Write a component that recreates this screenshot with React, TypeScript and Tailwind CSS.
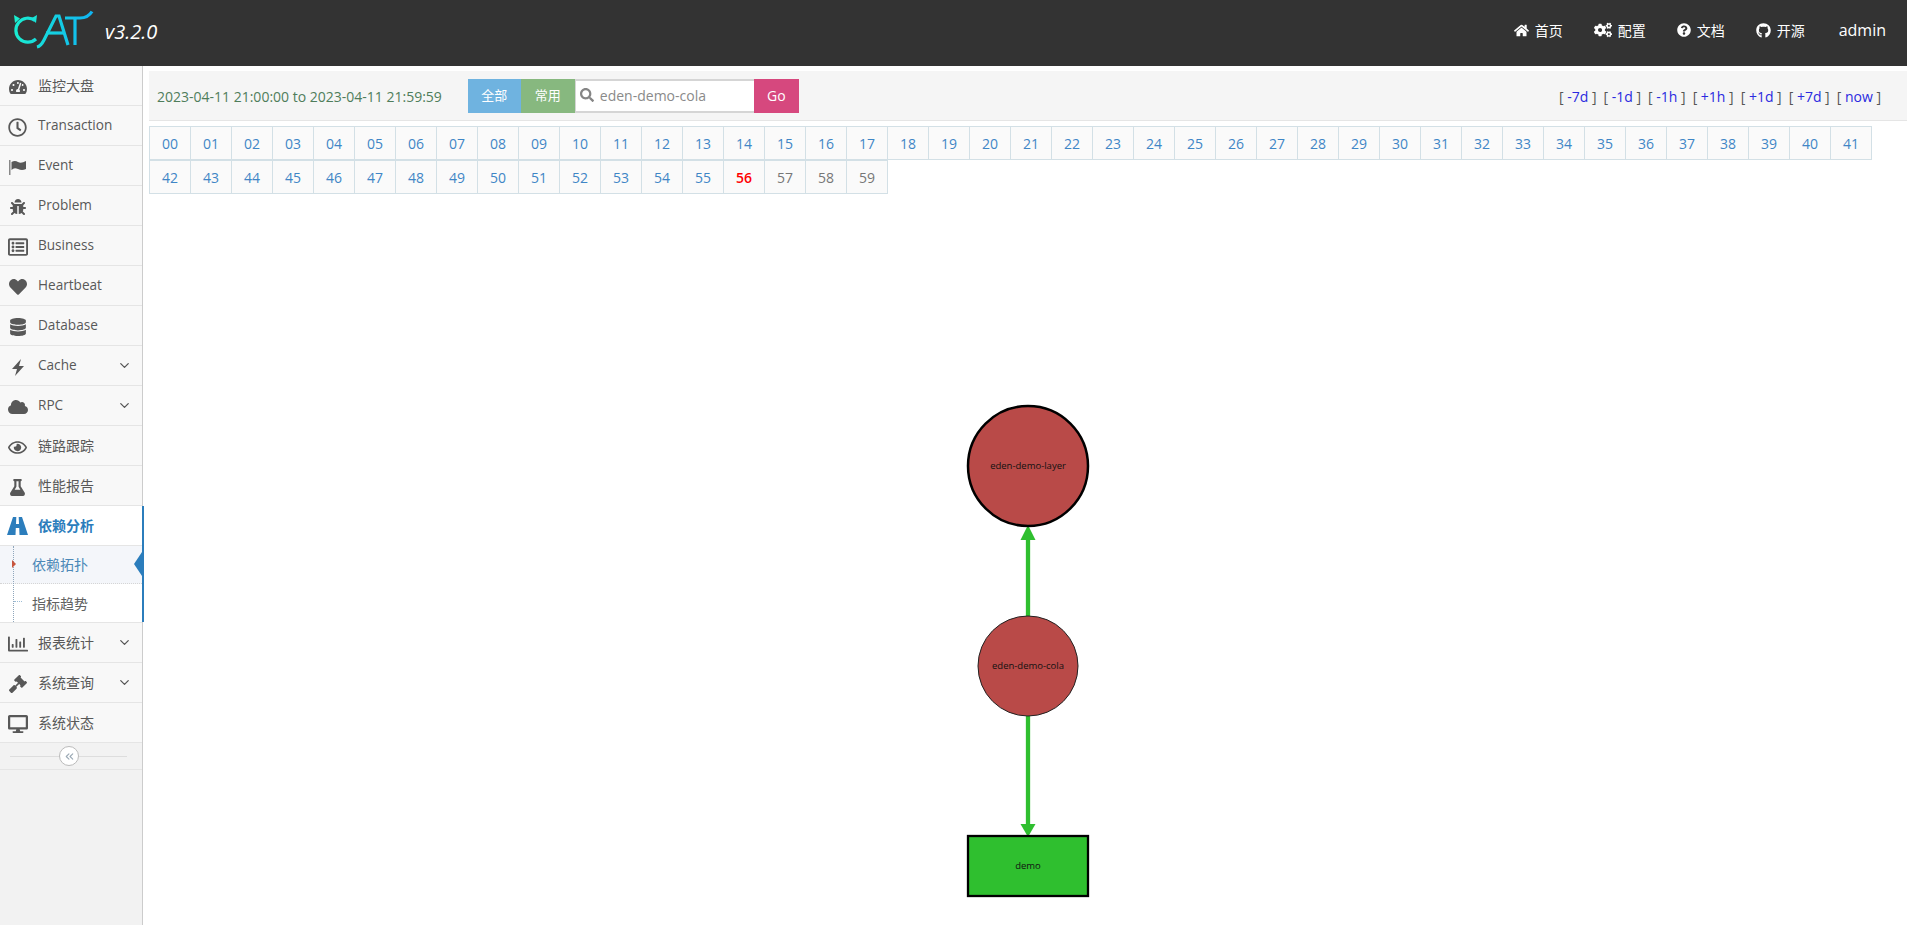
import type { ReactNode } from "react";
import {
  FaBug,
  FaCloud,
  FaCogs,
  FaDatabase,
  FaDesktop,
  FaFlask,
  FaGavel,
  FaGithub,
  FaHeart,
  FaHome,
  FaQuestionCircle,
  FaRegChartBar,
  FaRegClock,
  FaRegEye,
  FaRegListAlt,
  FaSearch,
  FaTachometerAlt,
} from "react-icons/fa";
import { FiChevronDown, FiChevronsLeft } from "react-icons/fi";

const FONT = "font-['Open_Sans','Noto_Sans_CJK_SC',sans-serif]";

type NavItem = { icon: ReactNode; label: string; arrow?: boolean };

function FlagIcon() {
  return (
    <svg width="18" height="15" viewBox="0 0 18 15" fill="currentColor">
      <rect x="0" y="0" width="1.500" height="15" fill="#888888" />
      <path d="M2.500 2Q6 0 9 2T17 1V9Q13 11 9 9T2.500 10Z" />
    </svg>
  );
}

function BoltIcon() {
  return (
    <svg width="12" height="17" viewBox="0 0 12 17" fill="currentColor">
      <path d="M9 0L0 10H5L3 17L12 7H7Z" />
    </svg>
  );
}

function RoadIcon() {
  return (
    <svg width="21" height="18" viewBox="0 0 21 18" fill="currentColor">
      <path d="M6 0H9.300L9 7H12L11.700 0H15L21 18H12.500L12.200 11H8.800L8.500 18H0Z" />
    </svg>
  );
}

const topItems: NavItem[] = [
  { icon: <FaTachometerAlt size={18} />, label: "监控大盘" },
  { icon: <FaRegClock size={19} />, label: "Transaction" },
  { icon: <FlagIcon />, label: "Event" },
  { icon: <FaBug size={16} />, label: "Problem" },
  { icon: <FaRegListAlt size={20} />, label: "Business" },
  { icon: <FaHeart size={18} />, label: "Heartbeat" },
  { icon: <FaDatabase size={18} />, label: "Database" },
  { icon: <BoltIcon />, label: "Cache", arrow: true },
  { icon: <FaCloud size={20} />, label: "RPC", arrow: true },
  { icon: <FaRegEye size={19} />, label: "链路跟踪" },
  { icon: <FaFlask size={17} />, label: "性能报告" },
];

const bottomItems: NavItem[] = [
  { icon: <FaRegChartBar size={20} />, label: "报表统计", arrow: true },
  { icon: <FaGavel size={18} />, label: "系统查询", arrow: true },
  { icon: <FaDesktop size={20} />, label: "系统状态" },
];

const hours = Array.from({ length: 60 }, (_, i) => String(i).padStart(2, "0"));
const jumps = ["-7d", "-1d", "-1h", "+1h", "+1d", "+7d", "now"];

function Logo() {
  return (
    <svg width="100" height="66" viewBox="0 0 100 66" fill="none">
      <defs>
        <linearGradient id="catLogo" x1="12" x2="92" y1="0" y2="0" gradientUnits="userSpaceOnUse">
          <stop offset="0" stopColor="#1aefd0" />
          <stop offset="1" stopColor="#10b4f2" />
        </linearGradient>
      </defs>
      <g stroke="url(#catLogo)" strokeWidth="3.200">
        <path d="M35 20.500A12 12 0 1 0 36 39" />
        <path d="M46 33H65" />
        <path d="M37 47Q41 46 44 40L56 16H59L68 45" />
        <path d="M65 18H80Q88 18 92 11.500" />
        <path d="M75 18V45" />
      </g>
      <path d="M14 15L20 18.500L15 23Z" fill="#1aefd0" />
      <path d="M37 15L31 18.500L36 23Z" fill="#1ae4d8" />
    </svg>
  );
}

function HeaderLink({ icon, label }: { icon: ReactNode; label: string }) {
  return (
    <div className="flex items-center gap-[6px] text-[14px] text-white">
      {icon}
      <span>{label}</span>
    </div>
  );
}

function SideItem({ item }: { item: NavItem }) {
  const latin = /^[A-Za-z]/.test(item.label);
  return (
    <div className="flex h-[40px] items-center border-b border-[#e5e5e5] bg-[#f8f8f8] text-[#585858]">
      <div className="flex w-[34px] shrink-0 justify-center pl-[1px] pt-[3px]">{item.icon}</div>
      <span className={`ml-[4px] flex-1 ${latin ? "text-[13.6px]" : "text-[14px]"}`}>{item.label}</span>
      {item.arrow && <FiChevronDown size={15} className="mr-[10px] text-[#555]" />}
    </div>
  );
}

function Sidebar() {
  return (
    <aside className="flex w-[143px] shrink-0 flex-col border-r border-[#cccccc] bg-[#f2f2f2]">
      {topItems.map((item) => (
        <SideItem key={item.label} item={item} />
      ))}

      {/* active group */}
      <div className="w-[144px] border-r-2 border-[#2b7dbc]">
        <div className="flex h-[40px] items-center border-b border-[#e5e5e5] bg-white text-[#2b7dbc]">
          <div className="flex w-[34px] shrink-0 justify-center pl-[1px]">
            <RoadIcon />
          </div>
          <span className="ml-[4px] text-[14px] font-bold">依赖分析</span>
        </div>
        <div className="relative bg-white">
          <div className="relative flex h-[38px] items-center border-b border-dotted border-[#d5d5d5] bg-[#f4f6fa] pl-[32px] text-[14px] text-[#4b88b7]">
            依赖拓扑
            <span className="absolute right-0 top-[6px] h-0 w-0 border-y-[12px] border-r-[8px] border-y-transparent border-r-[#2b7dbc]" />
          </div>
          <div className="relative flex h-[38px] items-center pl-[32px] text-[14px] text-[#616161]">
            <span className="absolute left-[14px] top-[17px] w-[8px] border-t border-dotted border-[#9dbdd6]" />
            指标趋势
          </div>
          <div className="absolute bottom-0 left-[13px] top-0 border-l border-dotted border-[#8fa6bb]" />
          <span className="absolute left-[12px] top-[14px] h-0 w-0 border-y-[4px] border-l-[4px] border-y-transparent border-l-[#c8553d]" />
        </div>
      </div>

      <div className="border-t border-[#e5e5e5]">
        {bottomItems.map((item) => (
          <SideItem key={item.label} item={item} />
        ))}
      </div>

      {/* collapse */}
      <div className="relative flex h-[27px] items-center border-b border-[#e5e5e5]">
        <div className="ml-[10px] w-[117px] border-t border-[#dddddd]" />
        <div className="absolute left-[59px] top-[3px] flex h-[20px] w-[20px] items-center justify-center rounded-full border border-[#bbbbbb] bg-white text-[#9aa8b4]">
          <FiChevronsLeft size={13} />
        </div>
      </div>
    </aside>
  );
}

function Toolbar() {
  return (
    <div className="flex h-[50px] items-center border-b border-[#e5e5e5] bg-[#f5f5f5] pl-[8px] pr-[26px]">
      <span className="pt-[2px] text-[14px] text-[#4f7d5b]">2023-04-11 21:00:00 to 2023-04-11 21:59:59</span>
      <div className="ml-[26px] flex h-[34px] text-[13px] text-white">
        <div className="flex w-[53px] items-center justify-center bg-[#6fb3e0]">全部</div>
        <div className="flex w-[54px] items-center justify-center bg-[#87b87f]">常用</div>
        <div className="flex w-[179px] items-center border-2 border-l border-r-0 border-[#d5d5d5] bg-white pl-[4px] text-[#8a8a8a]">
          <FaSearch size={14} className="mb-[2px] text-[#858585]" />
          <span className="ml-[6px] pb-[1px] text-[14px]">eden-demo-cola</span>
        </div>
        <div className="flex w-[45px] items-center justify-center bg-[#d6487e] text-[14px]">Go</div>
      </div>
      <div className="ml-auto flex gap-[7px] pt-[1px] text-[14px] text-[#555]">
        {jumps.map((j) => (
          <span key={j}>
            [ <span className="text-[#2a2ae0]">{j}</span> ]
          </span>
        ))}
      </div>
    </div>
  );
}

function HourCell({ hour }: { hour: string }) {
  const n = Number(hour);
  let color = "text-[#3f86c6]";
  if (n === 56) color = "font-semibold text-[#ff0000]";
  if (n > 56) color = "text-[#777777]";
  return (
    <div
      className={`-ml-px flex h-[34px] w-[42px] items-center justify-center border border-[#d3e0e6] bg-[#fafafa] text-[14px] first:ml-0 ${color}`}
    >
      {hour}
    </div>
  );
}

function Graph() {
  return (
    <svg width="1758" height="730" className="block" fontFamily="'Open Sans',sans-serif" fontSize="9.500">
      <g stroke="#2fbf2f" strokeWidth="4.300">
        <path d="M879 422V340" />
        <path d="M879 522V634" />
      </g>
      <path d="M879 331L871.500 346H886.500Z" fill="#2fbf2f" />
      <path d="M871.500 630H886.500L879 643Z" fill="#2fbf2f" />
      <circle cx="879" cy="272" r="60" fill="#b94a48" stroke="#000" strokeWidth="2.500" />
      <text x="879" y="275" textAnchor="middle" fill="#111">eden-demo-layer</text>
      <circle cx="879" cy="472" r="50" fill="#b94a48" stroke="#222" strokeWidth="1" />
      <text x="879" y="475" textAnchor="middle" fill="#111">eden-demo-cola</text>
      <rect x="819" y="642" width="120" height="60" fill="#2fbf2f" stroke="#000" strokeWidth="2.300" />
      <text x="879" y="675" textAnchor="middle" fill="#111">demo</text>
    </svg>
  );
}

export default function App() {
  return (
    <div className={`flex h-screen flex-col overflow-hidden bg-white ${FONT}`}>
      {/* header */}
      <header className="flex h-[66px] shrink-0 items-center bg-[#333333] pr-[21px]">
        <Logo />
        <span className="ml-[5px] pb-[2px] text-[20px] italic text-white">v3.2.0</span>
        <div className="ml-auto flex items-center gap-[31px] pb-[6px]">
          <HeaderLink icon={<FaHome size={15} />} label="首页" />
          <HeaderLink icon={<FaCogs size={18} />} label="配置" />
          <HeaderLink icon={<FaQuestionCircle size={14} />} label="文档" />
          <HeaderLink icon={<FaGithub size={15} />} label="开源" />
          <span className="ml-[3px] text-[16px] text-white">admin</span>
        </div>
      </header>

      <div className="flex flex-1">
        <Sidebar />
        <main className="flex-1 pl-[6px] pt-[5px]">
          <Toolbar />
          <div className="mt-[5px]">
            <div className="flex">
              {hours.slice(0, 42).map((h) => (
                <HourCell key={h} hour={h} />
              ))}
            </div>
            <div className="flex">
              {hours.slice(42).map((h) => (
                <HourCell key={h} hour={h} />
              ))}
            </div>
          </div>
          <Graph />
        </main>
      </div>
    </div>
  );
}
